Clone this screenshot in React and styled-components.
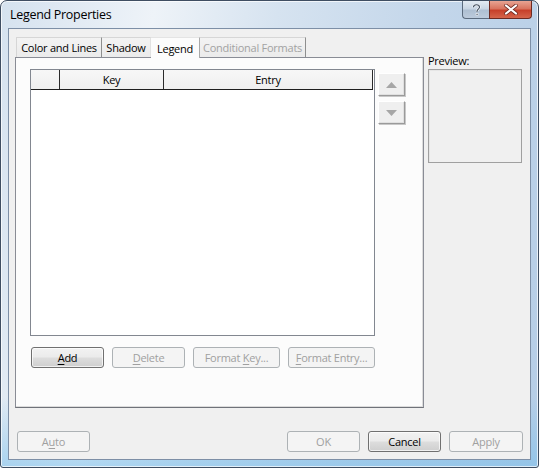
import React from 'react';
import styled, { createGlobalStyle, css } from 'styled-components';

const Global = createGlobalStyle`
  html, body { margin: 0; padding: 0; background: #ffffff; }
  body {
    width: 539px; height: 468px; overflow: hidden;
    font-family: "Open Sans", "Noto Sans", sans-serif;
    font-size: 11px; letter-spacing: -0.25px; color: #000;
  }
  * { box-sizing: border-box; }
`;

const Window = styled.div`
  width: 539px;
  height: 468px;
  border: 1px solid #3f4e62;
  border-radius: 7px 7px 3px 3px;
  background:
    linear-gradient(to bottom, rgba(255,255,255,0) 0%, rgba(255,255,255,0) 85%, rgba(120,190,235,0.55) 100%),
    linear-gradient(100deg, #d5e2ef 0%, #eef3f8 25%, #d6e3f0 45%, #c3d6ea 70%, #b5cde6 100%);
  box-shadow: inset 0 0 0 1px rgba(255,255,255,0.7);
  display: flex;
  flex-direction: column;
  overflow: hidden;
`;

const TitleBar = styled.div`
  height: 27px;
  display: flex;
  align-items: flex-start;
  padding: 0 6px 0 9px;
  flex: none;
`;

const Title = styled.div`
  font-size: 12.5px;
  letter-spacing: -0.3px;
  line-height: 16px;
  padding-top: 6px;
  color: #000;
`;

const CaptionGroup = styled.div`
  margin-left: auto;
  display: flex;
`;

const CaptionButton = styled.div`
  height: 18px;
  width: ${p => p.$w}px;
  display: flex;
  align-items: center;
  justify-content: center;
  border: 1px solid ${p => (p.$close ? '#6d2a22' : '#5b6b7e')};
  border-top: none;
  ${p => (p.$close
    ? css`
      border-radius: 0 0 4px 0;
      background: linear-gradient(to bottom, #e8a493 0%, #d8745f 45%, #c7402a 55%, #d5654b 100%);
    `
    : css`
      border-right: none;
      border-radius: 0 0 0 4px;
      background: linear-gradient(to bottom, #e3ebf3 0%, #c9d6e4 45%, #aebfd2 55%, #bccbdc 100%);
    `)}
  svg { display: block; }
`;

const Client = styled.div`
  flex: 1;
  margin: 0 7px 7px 7px;
  border: 1px solid #7d8fa6;
  background: #f0f0f0;
  display: flex;
  flex-direction: column;
`;

const MainRow = styled.div`
  display: flex;
  padding: 8px 0 0 6px;
`;

const TabColumn = styled.div`
  width: 409px;
  display: flex;
  flex-direction: column;
`;

const TabStrip = styled.div`
  display: flex;
  align-items: flex-end;
  height: 20px;
  padding-left: 1px;
  position: relative;
  z-index: 1;
`;

const Tab = styled.div`
  height: 20px;
  padding: 0 4px;
  display: flex;
  align-items: center;
  justify-content: center;
  width: ${p => p.$w}px;
  white-space: nowrap;
  border-top: 1px solid #d6d6d6;
  border-right: 1px solid ${p => (p.$beforeActive ? '#e2e2e2' : '#8e8f8f')};
  color: ${p => (p.$disabled ? '#a3a3a3' : '#000')};
  background: ${p => (p.$active
    ? '#fcfcfc'
    : 'linear-gradient(to bottom, #f3f3f3 0%, #ebebeb 100%)')};
  ${p => p.$active && css`
    height: 21px;
    margin-bottom: -1px;
    border-right: 1px solid #a9a9a9;
    border-top: 1px solid #e4e4e4;
  `}
  ${p => p.$first && css`border-left: 1px solid #d6d6d6;`}
`;

const Panel = styled.div`
  width: 409px;
  height: 351px;
  border: 1px solid #898c95;
  border-bottom-color: #6f7279;
  background: #fcfcfc;
  padding: 11px 0 0 14px;
  display: flex;
  flex-direction: column;
  box-shadow: inset -1px -1px 0 #dcdcdc;
`;

const ListRow = styled.div`
  display: flex;
  gap: 3px;
`;

const ListBox = styled.div`
  width: 345px;
  height: 267px;
  border: 1px solid #828790;
  background: #ffffff;
  padding-right: 1px;
`;

const Header = styled.div`
  display: flex;
  height: 20px;
  border-bottom: 1px solid #1e1e1e;
`;

const HeaderCell = styled.div`
  width: ${p => p.$w}px;
  flex: none;
  display: flex;
  align-items: center;
  justify-content: center;
  background: linear-gradient(to bottom, #f7f7f7 0%, #efefef 100%);
  border-right: 1px solid #2a2a2a;
  line-height: 18px;
`;

const SideButtons = styled.div`
  display: flex;
  flex-direction: column;
  gap: 5px;
  margin-top: 4px;
`;

const ArrowButton = styled.div`
  width: 27px;
  height: 23px;
  border-top: 1px solid #ffffff;
  border-left: 1px solid #ffffff;
  border-right: 1px solid #9a9a9a;
  border-bottom: 1px solid #9a9a9a;
  box-shadow: 1px 1px 0 #c8c8c8, inset -1px -1px 0 #e0e0e0;
  background: #efefef;
  display: flex;
  align-items: center;
  justify-content: center;
`;

const ButtonRow = styled.div`
  display: flex;
  gap: 8px;
  margin-top: 11px;
  padding-left: 1px;
`;

const Button = styled.div`
  width: ${p => p.$w}px;
  height: 21px;
  border-radius: 3px;
  display: flex;
  align-items: center;
  justify-content: center;
  white-space: nowrap;
  ${p => (p.$disabled
    ? css`
      border: 1px solid #adb2b5;
      background: #f4f4f4;
      color: #a0a0a0;
    `
    : css`
      border: 1px solid #707070;
      background: linear-gradient(to bottom, #f2f2f2 0%, #ebebeb 48%, #dddddd 52%, #cfcfcf 100%);
      color: #000;
      box-shadow: inset 0 0 0 1px rgba(255,255,255,0.7);
    `)}
  u { text-decoration: underline; text-underline-offset: 2px; }
`;

const PreviewColumn = styled.div`
  margin-left: 4px;
  display: flex;
  flex-direction: column;
  padding-top: 16px;
`;

const PreviewLabel = styled.div`
  line-height: 15px;
  height: 15px;
`;

const PreviewBox = styled.div`
  margin-top: 1px;
  width: 94px;
  height: 94px;
  border: 1px solid #a0a0a0;
  box-shadow: inset 1px 1px 0 #e6e6e6;
  background: #f0f0f0;
`;

const Footer = styled.div`
  display: flex;
  align-items: center;
  padding: 0 7px 0 8px;
  margin-top: 23px;
`;

const FooterRight = styled.div`
  margin-left: auto;
  display: flex;
  gap: 8px;
`;

const Triangle = ({ down }) => (
  <svg width="11" height="6" viewBox="0 0 11 6">
    <path d={down ? 'M0 0 H11 L5.5 6 Z' : 'M5.5 0 L11 6 H0 Z'} fill="#a6a6a6" />
  </svg>
);

export default function App() {
  return (
    <>
      <Global />
      <Window>
        <TitleBar>
          <Title>Legend Properties</Title>
          <CaptionGroup>
            <CaptionButton $w={27}>
              <svg width="9" height="12" viewBox="0 0 9 12">
                <path d="M1.5 3.2 C1.5 1.5 2.8 0.8 4.5 0.8 C6.3 0.8 7.5 1.8 7.5 3.3 C7.5 5 5 5.4 5 7.3 V8" fill="none" stroke="#ffffff" strokeWidth="2.2" />
                <path d="M1.5 3.2 C1.5 1.5 2.8 0.8 4.5 0.8 C6.3 0.8 7.5 1.8 7.5 3.3 C7.5 5 5 5.4 5 7.3 V8" fill="none" stroke="#3c4a5c" strokeWidth="1.1" />
                <rect x="4.1" y="9.3" width="1.9" height="1.9" fill="#3c4a5c" stroke="#ffffff" strokeWidth="0.6" />
              </svg>
            </CaptionButton>
            <CaptionButton $w={43} $close>
              <svg width="14" height="11" viewBox="0 0 14 11">
                <path d="M2 1.5 L12 9.5 M12 1.5 L2 9.5" stroke="#6d2a22" strokeWidth="3.6" strokeLinecap="round" />
                <path d="M2 1.5 L12 9.5 M12 1.5 L2 9.5" stroke="#ffffff" strokeWidth="2.2" strokeLinecap="round" />
              </svg>
            </CaptionButton>
          </CaptionGroup>
        </TitleBar>
        <Client>
          <MainRow>
            <TabColumn>
              <TabStrip>
                <Tab $first $w={86}>Color and Lines</Tab>
                <Tab $beforeActive $w={49}>Shadow</Tab>
                <Tab $active $w={49}>Legend</Tab>
                <Tab $disabled $w={106}>Conditional Formats</Tab>
              </TabStrip>
              <Panel>
                <ListRow>
                  <ListBox>
                    <Header>
                      <HeaderCell $w={29} />
                      <HeaderCell $w={104}>Key</HeaderCell>
                      <HeaderCell $w={209}>Entry</HeaderCell>
                    </Header>
                  </ListBox>
                  <SideButtons>
                    <ArrowButton><Triangle /></ArrowButton>
                    <ArrowButton><Triangle down /></ArrowButton>
                  </SideButtons>
                </ListRow>
                <ButtonRow>
                  <Button $w={73}><span><u>A</u>dd</span></Button>
                  <Button $w={73} $disabled><span><u>D</u>elete</span></Button>
                  <Button $w={87} $disabled><span>Format <u>K</u>ey...</span></Button>
                  <Button $w={87} $disabled><span><u>F</u>ormat Entry...</span></Button>
                </ButtonRow>
              </Panel>
            </TabColumn>
            <PreviewColumn>
              <PreviewLabel>Preview:</PreviewLabel>
              <PreviewBox />
            </PreviewColumn>
          </MainRow>
          <Footer>
            <Button $w={73} $disabled><span>A<u>u</u>to</span></Button>
            <FooterRight>
              <Button $w={73} $disabled>OK</Button>
              <Button $w={73}>Cancel</Button>
              <Button $w={74} $disabled>Apply</Button>
            </FooterRight>
          </Footer>
        </Client>
      </Window>
    </>
  );
}
